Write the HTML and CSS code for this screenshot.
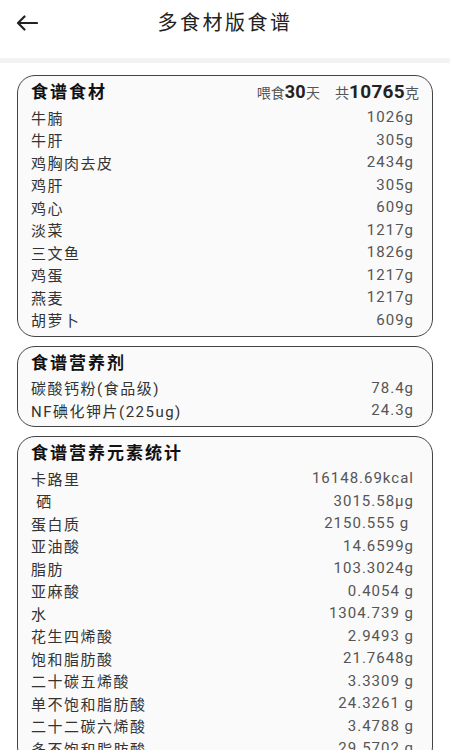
FILE: index.html
```html
<!DOCTYPE html>
<html lang="zh-CN">
<head>
  <meta charset="UTF-8" />
  <meta name="viewport" content="width=device-width, initial-scale=1.0" />
  <title>多食材版食谱</title>
  <link rel="stylesheet" href="styles.css">
</head>
<body>
  <!-- Top bar -->
  <div class="topbar">
    <span class="back">
      <svg width="22" height="16" viewBox="0 0 22 16">
        <path d="M21 8H2M8.5 1.5L2 8l6.5 6.5" fill="none" stroke="#222" stroke-width="2.2" stroke-linecap="round" stroke-linejoin="round"/>
      </svg>
    </span>
    <h1>多食材版食谱</h1>
  </div>
  <div class="divider"></div>

  <div class="content">
    <!-- Ingredients -->
    <div class="card">
      <div class="card-head">
        <span class="card-title">食谱食材</span>
        <span class="stats">
          <span class="small">喂食</span><b>30</b><span class="small">天</span>
          <span class="small sp">共</span><b class="big">10765</b><span class="small">克</span>
        </span>
      </div>
      <div class="row"><span>牛腩</span><span class="val">1026g</span></div>
      <div class="row"><span>牛肝</span><span class="val">305g</span></div>
      <div class="row"><span>鸡胸肉去皮</span><span class="val">2434g</span></div>
      <div class="row"><span>鸡肝</span><span class="val">305g</span></div>
      <div class="row"><span>鸡心</span><span class="val">609g</span></div>
      <div class="row"><span>淡菜</span><span class="val">1217g</span></div>
      <div class="row"><span>三文鱼</span><span class="val">1826g</span></div>
      <div class="row"><span>鸡蛋</span><span class="val">1217g</span></div>
      <div class="row"><span>燕麦</span><span class="val">1217g</span></div>
      <div class="row"><span>胡萝卜</span><span class="val">609g</span></div>
    </div>

    <!-- Supplements -->
    <div class="card">
      <div class="card-head">
        <span class="card-title">食谱营养剂</span>
      </div>
      <div class="row"><span>碳酸钙粉(食品级)</span><span class="val">78.4g</span></div>
      <div class="row"><span>NF碘化钾片(225ug)</span><span class="val">24.3g</span></div>
    </div>

    <!-- Nutrients -->
    <div class="card">
      <div class="card-head">
        <span class="card-title">食谱营养元素统计</span>
      </div>
      <div class="row"><span>卡路里</span><span class="val">16148.69kcal</span></div>
      <div class="row"><span>&nbsp;硒</span><span class="val">3015.58μg</span></div>
      <div class="row"><span>蛋白质</span><span class="val">2150.555 g&nbsp;</span></div>
      <div class="row"><span>亚油酸</span><span class="val">14.6599g</span></div>
      <div class="row"><span>脂肪</span><span class="val">103.3024g</span></div>
      <div class="row"><span>亚麻酸</span><span class="val">0.4054 g</span></div>
      <div class="row"><span>水</span><span class="val">1304.739 g</span></div>
      <div class="row"><span>花生四烯酸</span><span class="val">2.9493 g</span></div>
      <div class="row"><span>饱和脂肪酸</span><span class="val">21.7648g</span></div>
      <div class="row"><span>二十碳五烯酸</span><span class="val">3.3309 g</span></div>
      <div class="row"><span>单不饱和脂肪酸</span><span class="val">24.3261 g</span></div>
      <div class="row"><span>二十二碳六烯酸</span><span class="val">3.4788 g</span></div>
      <div class="row"><span>多不饱和脂肪酸</span><span class="val">29.5702 g</span></div>
    </div>
  </div>
</body>
</html>
```

FILE: styles.css
```css
body {
  margin: 0;
  background-color: #ffffff;
  font-family: Roboto, "Noto Sans CJK SC", sans-serif;
  color: #333;
}

.topbar {
  height: 58px;
  box-sizing: border-box;
  padding-top: 8px;
  display: flex;
  justify-content: center;
  position: relative;
  background-color: #fff;
}

.topbar h1 {
  margin: 0;
  height: 30px;
  line-height: 30px;
  font-size: 20px;
  font-weight: normal;
  letter-spacing: 2.5px;
  color: #222;
}

.back {
  position: absolute;
  left: 16px;
  top: 15px;
}

.divider {
  height: 5px;
  background-color: #f3f3f3;
}

.content {
  padding: 12px 17px 0 17px;
}

.card {
  border: 1.5px solid #444;
  border-radius: 18px;
  background-color: #fafafa;
  padding: 6px 13px 4.5px 13px;
  margin-bottom: 9px;
}

.card-head {
  height: 24px;
  display: flex;
  align-items: flex-start;
  justify-content: space-between;
}

.card-title {
  font-size: 17px;
  line-height: 20px;
  font-weight: bold;
  letter-spacing: 2px;
  color: #111;
}

.stats {
  color: #555;
  display: flex;
  align-items: baseline;
  line-height: 20px;
}

.stats b {
  font-size: 18px;
  color: #222;
  letter-spacing: 0.3px;
}

.stats .big {
  font-size: 19px;
}

.small {
  font-size: 14px;
}

.sp {
  margin-left: 15px;
}

.row {
  height: 22.5px;
  display: flex;
  align-items: center;
  justify-content: space-between;
  font-size: 15px;
  letter-spacing: 1.5px;
  padding-right: 5px;
}

.val {
  color: #555;
  letter-spacing: 1px;
}
```
